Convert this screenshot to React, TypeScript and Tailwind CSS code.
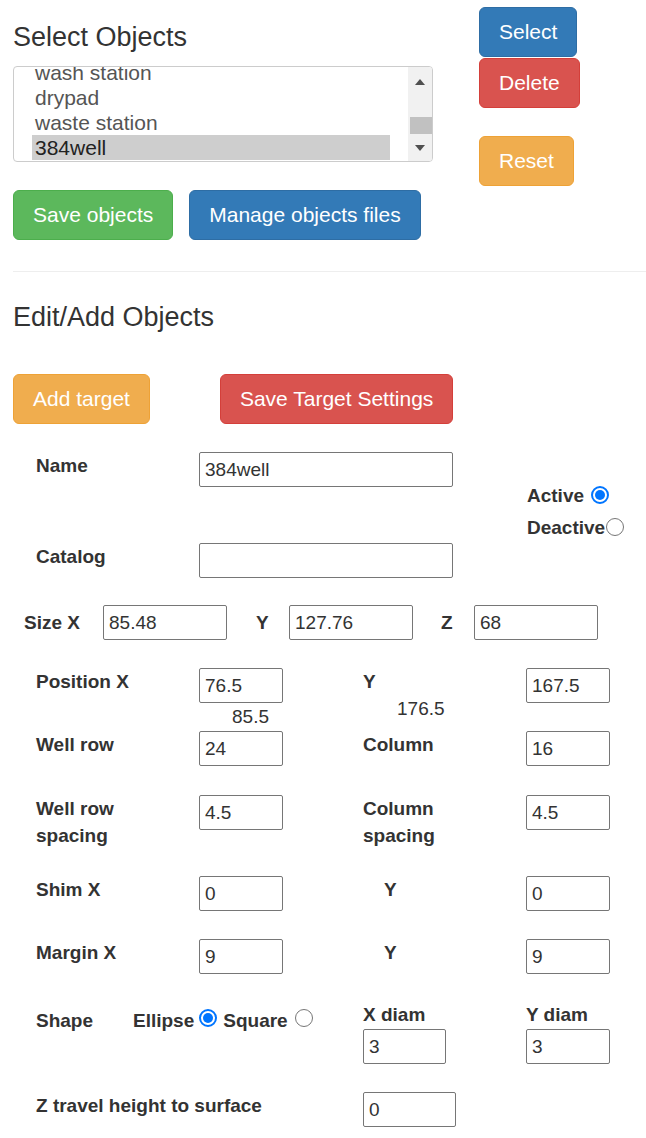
import React from "react";

const Btn = ({ children, className }: { children: React.ReactNode; className: string }) => (
  <button
    type="button"
    className={
      "h-[50px] px-[19px] border rounded-[6px] text-white text-[21px] leading-[28px] whitespace-nowrap " + className
    }
  >
    {children}
  </button>
);

const Radio = ({ checked }: { checked?: boolean }) =>
  checked ? (
    <span className="inline-flex shrink-0 w-[18px] h-[18px] rounded-full border-2 border-[#0075ff] bg-white p-[2px]">
      <span className="block w-full h-full rounded-full bg-[#0075ff]" />
    </span>
  ) : (
    <span className="inline-block shrink-0 w-[18px] h-[18px] rounded-full border border-[#767676] bg-white" />
  );

const Inp = ({ value, className }: { value: string; className: string }) => (
  <input
    readOnly
    defaultValue={value}
    className={
      "h-[35px] border border-[#767676] rounded-[2px] px-[5px] text-[19px] text-[#333] bg-white outline-none " +
      className
    }
  />
);

const Label = ({ children, className = "" }: { children: React.ReactNode; className?: string }) => (
  <div className={"font-bold text-[19px] leading-[27px] text-[#333] " + className}>{children}</div>
);

export default function App() {
  return (
    <div className="w-[646px] min-h-[1138px] bg-white text-[#333] font-['Liberation_Sans',Arial,sans-serif] overflow-hidden">
      {/* Top section */}
      <div className="flex">
        <div className="pl-[13px] w-[479px] shrink-0">
          <h3 className="mt-[22px] text-[27px] leading-[30px] font-normal">Select Objects</h3>
          <div className="mt-[14px] w-[420px] h-[96px] border border-[#ccc] rounded-[4px] flex overflow-hidden">
            <div className="flex-1 pl-[18px] pr-[18px] overflow-hidden">
              <div className="-mt-[7px] text-[21px] leading-[25px] text-[#555]">
                <div className="px-[3px]">wash station</div>
                <div className="px-[3px]">drypad</div>
                <div className="px-[3px]">waste station</div>
                <div className="px-[3px] bg-[#cecece] text-[#222]">384well</div>
              </div>
            </div>
            <div className="w-[24px] bg-[#f1f1f1] flex flex-col items-center">
              <div className="mt-[12px] w-0 h-0 border-l-[5px] border-r-[5px] border-b-[6px] border-l-transparent border-r-transparent border-b-[#505050]" />
              <div className="mt-[32px] ml-[2px] w-[22px] h-[17px] bg-[#c1c1c1]" />
              <div className="mt-[11px] w-0 h-0 border-l-[5px] border-r-[5px] border-t-[6px] border-l-transparent border-r-transparent border-t-[#505050]" />
            </div>
          </div>
          <div className="mt-[28px] flex gap-[16px]">
            <Btn className="bg-[#5cb85c] border-[#4cae4c]">Save objects</Btn>
            <Btn className="bg-[#337ab7] border-[#2e6da4]">Manage objects files</Btn>
          </div>
        </div>
        <div className="pt-[7px] flex flex-col items-start">
          <Btn className="bg-[#337ab7] border-[#2e6da4]">Select</Btn>
          <Btn className="mt-[1px] bg-[#d9534f] border-[#d43f3a]">Delete</Btn>
          <Btn className="mt-[28px] bg-[#f0ad4e] border-[#eea236]">Reset</Btn>
        </div>
      </div>

      <div className="mt-[31px] ml-[13px] h-px bg-[#eee]" />

      <div className="pl-[13px]">
        <h3 className="mt-[30px] text-[27px] leading-[30px] font-normal">Edit/Add Objects</h3>
        <div className="mt-[42px] flex gap-[70px]">
          <Btn className="bg-[#f0ad4e] border-[#eea236]">Add target</Btn>
          <Btn className="bg-[#d9534f] border-[#d43f3a]">Save Target Settings</Btn>
        </div>
      </div>

      {/* Name / Catalog / Active */}
      <div className="mt-[28px] flex">
        <div className="pl-[36px]">
          <div className="flex">
            <Label className="w-[163px]">Name</Label>
            <Inp value="384well" className="w-[254px]" />
          </div>
          <div className="mt-[56px] flex">
            <Label className="w-[163px]">Catalog</Label>
            <Inp value="" className="w-[254px]" />
          </div>
        </div>
        <div className="ml-[74px] mt-[28px] font-bold text-[19px] leading-[32px]">
          <div className="flex items-center">
            <span>Active</span>
            <span className="ml-[7px] -mt-[2px] flex">
              <Radio checked />
            </span>
          </div>
          <div className="flex items-center">
            <span>Deactive</span>
            <span className="ml-[1px] -mt-[2px] flex">
              <Radio />
            </span>
          </div>
        </div>
      </div>

      {/* Size */}
      <div className="mt-[27px] pl-[24px] flex items-center">
        <Label className="w-[79px]">Size X</Label>
        <Inp value="85.48" className="w-[124px]" />
        <Label className="ml-[29px] w-[33px]">Y</Label>
        <Inp value="127.76" className="w-[124px]" />
        <Label className="ml-[28px] w-[33px]">Z</Label>
        <Inp value="68" className="w-[124px]" />
      </div>

      {/* Position */}
      <div className="mt-[28px] pl-[36px] flex items-start">
        <Label className="w-[163px]">Position X</Label>
        <div className="w-[84px]">
          <Inp value="76.5" className="w-[84px]" />
          <div className="pl-[33px] text-[19px] leading-[28px] whitespace-nowrap">85.5</div>
        </div>
        <div className="ml-[80px] w-[163px]">
          <Label>Y</Label>
          <div className="pl-[34px] text-[19px] leading-[27px]">176.5</div>
        </div>
        <Inp value="167.5" className="w-[84px]" />
      </div>

      {/* Well row */}
      <div className="pl-[36px] flex items-start">
        <Label className="w-[163px]">Well row</Label>
        <Inp value="24" className="w-[84px]" />
        <Label className="ml-[80px] w-[163px]">Column</Label>
        <Inp value="16" className="w-[84px]" />
      </div>

      {/* Well row spacing */}
      <div className="mt-[29px] pl-[36px] flex items-start">
        <Label className="w-[163px]">
          Well row
          <br />
          spacing
        </Label>
        <Inp value="4.5" className="w-[84px]" />
        <Label className="ml-[80px] w-[163px]">
          Column
          <br />
          spacing
        </Label>
        <Inp value="4.5" className="w-[84px]" />
      </div>

      {/* Shim */}
      <div className="mt-[27px] pl-[36px] flex items-start">
        <Label className="w-[163px]">Shim X</Label>
        <Inp value="0" className="w-[84px]" />
        <Label className="ml-[80px] w-[163px] pl-[21px]">Y</Label>
        <Inp value="0" className="w-[84px]" />
      </div>

      {/* Margin */}
      <div className="mt-[28px] pl-[36px] flex items-start">
        <Label className="w-[163px]">Margin X</Label>
        <Inp value="9" className="w-[84px]" />
        <Label className="ml-[80px] w-[163px] pl-[21px]">Y</Label>
        <Inp value="9" className="w-[84px]" />
      </div>

      {/* Shape */}
      <div className="mt-[27px] pl-[36px] flex items-start">
        <div className="w-[327px] mt-[6px] flex items-center font-bold text-[19px] leading-[27px]">
          <span className="w-[97px]">Shape</span>
          <span>Ellipse</span>
          <span className="ml-[5px] -mt-[5px] flex">
            <Radio checked />
          </span>
          <span className="ml-[6px]">Square</span>
          <span className="ml-[7px] -mt-[5px] flex">
            <Radio />
          </span>
        </div>
        <div className="w-[163px]">
          <Label>X diam</Label>
          <Inp value="3" className="mt-[1px] w-[83px]" />
        </div>
        <div>
          <Label>Y diam</Label>
          <Inp value="3" className="mt-[1px] w-[84px]" />
        </div>
      </div>

      {/* Z travel */}
      <div className="mt-[28px] pl-[36px] flex items-start">
        <Label className="w-[327px]">Z travel height to surface</Label>
        <Inp value="0" className="w-[93px]" />
      </div>
    </div>
  );
}
